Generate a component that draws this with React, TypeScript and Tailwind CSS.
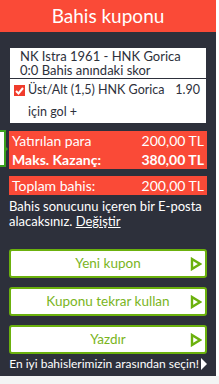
import React from 'react'

function Arrow() {
  return (
    <svg width="12" height="14" viewBox="0 0 12 14" className="absolute right-[3px] top-1/2 -translate-y-1/2">
      <path d="M2 2 L10 7 L2 12 Z" fill="none" stroke="#6bb10d" strokeWidth="2.4" strokeLinejoin="miter" />
    </svg>
  )
}

function GreenButton({ label }: { label: string }) {
  return (
    <button className="relative h-[29px] w-full rounded-[3px] border-2 border-[#6bb10d] bg-white text-[13.5px] leading-[25px] text-[#7ab51d]">
      {label}
      <Arrow />
    </button>
  )
}

export default function App() {
  return (
    <div className="flex h-[384px] w-[219px] flex-col bg-white" style={{ fontFamily: 'Lato, "Open Sans", sans-serif' }}>
      <div className="relative flex h-[376px] w-[216px] flex-col overflow-hidden bg-[#2d303b]">
        {/* Header */}
        <div className="flex h-[32px] shrink-0 items-center justify-center bg-[#fa4a37] text-[19px] text-white">
          Bahis kuponu
        </div>

        {/* clipped side tab */}
        <div className="absolute left-0 top-[130px] h-[37px] w-[6px] border-2 border-l-0 border-[#3aa01c] bg-white">
          <span className="absolute right-[-4px] top-1/2 h-0 w-0 -translate-y-1/2 border-y-[4px] border-l-[4px] border-y-transparent border-l-[#3aa01c]"></span>
        </div>

        <div className="flex flex-col px-[9px] pt-[16px]">
          {/* Bet card */}
          <div className="mx-px bg-white text-[13px] leading-[14px] text-[#2d303b]">
            <div className="whitespace-nowrap px-[10px] py-px">
              <div>NK Istra 1961 - HNK Gorica</div>
              <div>0:0 Bahis anındaki skor</div>
            </div>
            <div className="h-px bg-[#2d303b]"></div>
            <div className="flex items-start pl-[4px] pr-[6px] pt-[5px] text-[12.5px]">
              <span className="mt-px flex h-[11px] w-[11px] shrink-0 items-center justify-center bg-[#f03c2c]">
                <svg width="9" height="8" viewBox="0 0 9 8">
                  <path d="M1 4 L3.5 6.5 L8 1" fill="none" stroke="white" strokeWidth="2" />
                </svg>
              </span>
              <div className="-mt-[5px] ml-[3px] flex-1 whitespace-nowrap leading-[22px]">
                <div>Üst/Alt (1,5) HNK Gorica</div>
                <div>için gol +</div>
              </div>
              <span className="-mt-[5px] ml-2 leading-[22px]">1.90</span>
            </div>
          </div>

          {/* Stakes */}
          <div className="mt-[8px] flex flex-col bg-[#fa4a37] px-[3px] text-[14px] text-white">
            <div className="flex h-[19px] items-center justify-between">
              <span>Yatırılan para</span>
              <span>200,00 TL</span>
            </div>
            <div className="flex h-[19px] items-center justify-between font-bold">
              <span>Maks. Kazanç:</span>
              <span>380,00 TL</span>
            </div>
          </div>

          <div className="mt-[7px] flex h-[19px] items-center justify-between bg-[#fa4a37] px-[3px] text-[14px] text-white">
            <span>Toplam bahis:</span>
            <span>200,00 TL</span>
          </div>

          <p className="mt-[4px] text-[13px] leading-[15px] text-white">
            Bahis sonucunu içeren bir E-posta alacaksınız. <span className="underline">Değiştir</span>
          </p>

          {/* Buttons */}
          <div className="mt-[20px] flex flex-col gap-[9px]">
            <GreenButton label="Yeni kupon" />
            <GreenButton label="Kuponu tekrar kullan" />
            <GreenButton label="Yazdır" />
          </div>

          <div className="mt-[3px] flex h-[14px] items-center justify-center gap-[2px] whitespace-nowrap text-[12px] text-white">
            <span>En iyi bahislerimizin arasından seçin!</span>
            <span className="h-0 w-0 border-y-[6px] border-l-[6px] border-y-transparent border-l-white"></span>
          </div>
        </div>
      </div>
      <div className="flex-1 bg-[#f3f4f4]"></div>
    </div>
  )
}
